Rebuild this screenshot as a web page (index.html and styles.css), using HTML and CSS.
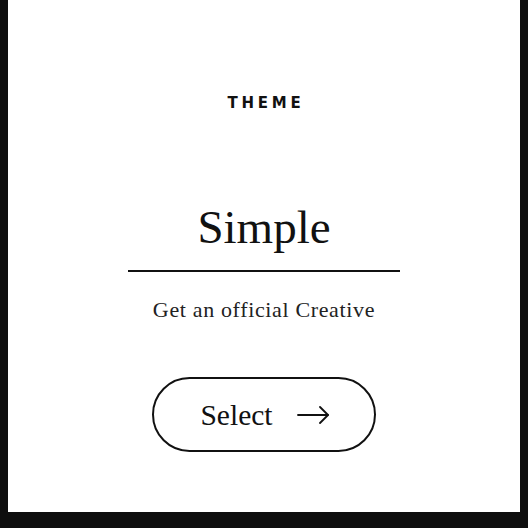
FILE: index.html
```html
<!DOCTYPE html>
<html>
<head>
<meta charset="utf-8">
<link rel="stylesheet" href="styles.css">
</head>
<body>
<div class="card">
  <div class="eyebrow">THEME</div>
  <h1 class="title">Simple</h1>
  <div class="rule"></div>
  <p class="desc">Get an official Creative</p>
  <button class="select">
    <span class="label">Select</span>
    <svg class="arrow" width="33" height="18" viewBox="0 0 33 18" fill="none" stroke="#111" stroke-width="1.8" stroke-linecap="round" stroke-linejoin="round">
      <path d="M1 9 H31"/>
      <path d="M23 1 L31 9 L23 17"/>
    </svg>
  </button>
</div>
</body>
</html>
```
FILE: styles.css
```css
html {
  background: #0e0e0e;
}
body {
  margin: 0 8px;
  height: 528px;
  overflow: hidden;
}
.card {
  background: #fff;
  height: 512px;
  display: flex;
  flex-direction: column;
  align-items: center;
  color: #111;
}
.eyebrow {
  margin-top: 95px;
  font-family: "DejaVu Sans", "Liberation Sans", sans-serif;
  font-weight: 700;
  font-size: 15px;
  letter-spacing: 3.8px;
  line-height: 16px;
  padding-left: 4px;
}
.title {
  margin: 89px 0 0;
  font-family: "Liberation Serif", "Times New Roman", serif;
  font-weight: 400;
  font-size: 47px;
  line-height: 54px;
}
.rule {
  width: 272px;
  height: 2px;
  background: #111;
  margin-top: 16px;
}
.desc {
  margin: 25px 0 0;
  font-family: "Liberation Serif", "Times New Roman", serif;
  font-size: 22px;
  letter-spacing: 0.65px;
  line-height: 26px;
  color: #222;
}
.select {
  margin-top: 54px;
  width: 224px;
  height: 75px;
  border: 2px solid #111;
  border-radius: 40px;
  background: #fff;
  display: flex;
  align-items: center;
  justify-content: center;
  gap: 24px;
  padding: 0 0 0 2px;
  font-family: "Liberation Serif", "Times New Roman", serif;
  font-size: 29.5px;
  color: #111;
}
.label {
  line-height: 30px;
}
.arrow {
  display: block;
}
```
